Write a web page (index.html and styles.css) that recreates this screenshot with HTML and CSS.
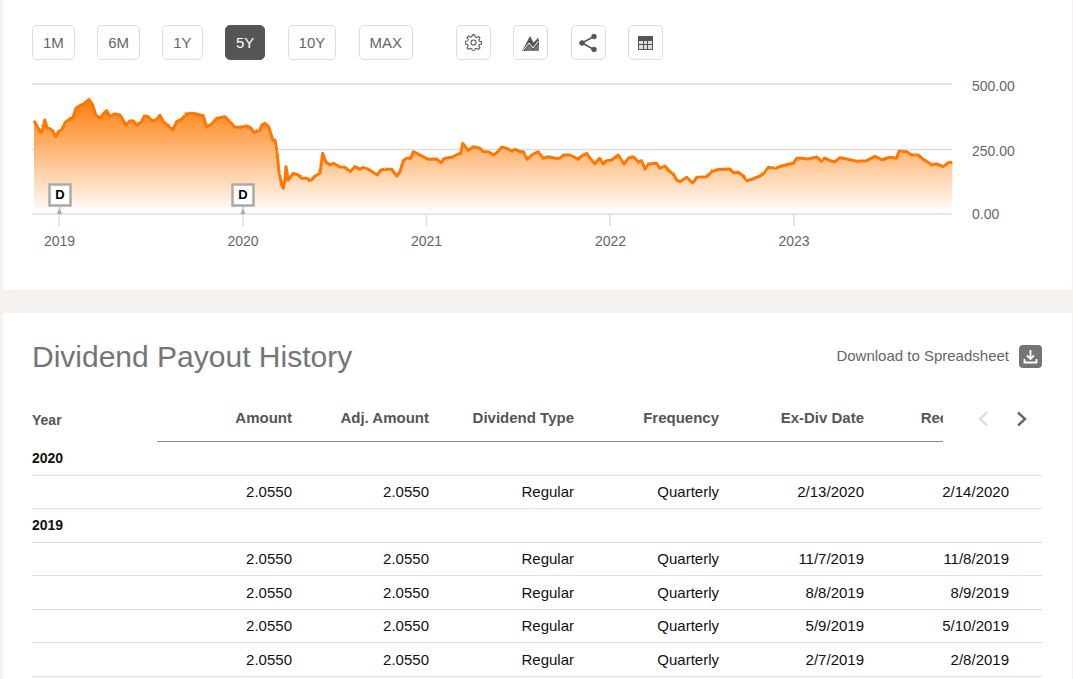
FILE: index.html
```html
<!DOCTYPE html>
<html lang="en">
<head>
  <meta charset="UTF-8" />
  <meta name="viewport" content="width=device-width, initial-scale=1.0"/>
  <title>Dividend Payout History</title>
  <link rel="stylesheet" href="styles.css">
</head>
<body>

  <section class="panel chart-panel">
    <div class="toolbar">
      <button class="tool">1M</button>
      <button class="tool">6M</button>
      <button class="tool">1Y</button>
      <button class="tool active">5Y</button>
      <button class="tool">10Y</button>
      <button class="tool">MAX</button>
      <button class="tool icon first-icon">
        <svg width="17" height="17" viewBox="0 0 16 16" fill="none" stroke="#555" stroke-width="1">
          <path d="M6.900 .8h2.200l.4 2 1.300.6 1.800-1.100 1.500 1.500-1.100 1.800.6 1.300 2 .4v2.200l-2 .4-.6 1.300 1.100 1.800-1.500 1.500-1.800-1.100-1.300.6-.4 2H6.900l-.4-2-1.300-.6-1.800 1.100-1.500-1.500 1.100-1.800-.6-1.300-2-.4V6.900l2-.4.6-1.300-1.100-1.800 1.500-1.500 1.800 1.100 1.300-.6z"/>
          <circle cx="8" cy="8" r="2.400"/>
        </svg>
      </button>
      <button class="tool icon">
        <svg width="17" height="16" viewBox="0 0 17 16">
          <path d="M0 16 8 1l3.500 6.500L16 3l1 2v11z" fill="#555"/>
          <path d="M1 15.500 7 8l4 5 5.500-7" fill="none" stroke="#fff" stroke-width="1"/>
          <path d="M3 16 7 10l4 5 6-6.500V16z" fill="#777"/>
        </svg>
      </button>
      <button class="tool icon">
        <svg width="18" height="18" viewBox="0 0 18 18" fill="#555" stroke="#555">
          <line x1="3" y1="9" x2="15" y2="2.500" stroke-width="1.500"/>
          <line x1="3" y1="9" x2="15" y2="15.500" stroke-width="1.500"/>
          <circle cx="3" cy="9" r="2.300"/>
          <circle cx="15" cy="2.500" r="2.300"/>
          <circle cx="15" cy="15.500" r="2.300"/>
        </svg>
      </button>
      <button class="tool icon">
        <svg width="15" height="14" viewBox="0 0 15 14">
          <rect x="0" y="0" width="15" height="14" fill="#555"/>
          <path d="M1 5h4v3H1zM6 5h3v3H6zM10 5h4v3h-4zM1 9h4v4H1zM6 9h3v4H6zM10 9h4v4h-4z" fill="#ddd"/>
        </svg>
      </button>
    </div>

    <svg class="chart" width="1000" height="170" viewBox="32 80 1000 170">
      <defs>
        <linearGradient id="areaFill" gradientUnits="userSpaceOnUse" x1="0" y1="99" x2="0" y2="214">
          <stop offset="0" stop-color="#ff7d0a"/>
          <stop offset="1" stop-color="#ffffff"/>
        </linearGradient>
        <filter id="rough" x="-1%" y="-10%" width="102%" height="120%">
          <feTurbulence type="fractalNoise" baseFrequency="0.35" numOctaves="2" seed="4"/>
          <feDisplacementMap in="SourceGraphic" scale="2" yChannelSelector="G" xChannelSelector="R"/>
        </filter>
      </defs>

      <g class="grid">
        <line x1="32" y1="84" x2="952" y2="84"/>
        <line x1="32" y1="149.500" x2="952" y2="149.500"/>
        <line x1="32" y1="214" x2="952" y2="214"/>
        <line x1="59" y1="214" x2="59" y2="226"/>
        <line x1="243" y1="214" x2="243" y2="226"/>
        <line x1="426.500" y1="214" x2="426.500" y2="226"/>
        <line x1="610" y1="214" x2="610" y2="226"/>
        <line x1="794" y1="214" x2="794" y2="226"/>
      </g>

      <path fill="url(#areaFill)" d="M34 213V120.700L37.300 126.700 40.700 132.700 42.700 130 44.700 120 47.300 128.300 51.700 129.300 55.700 136.700 58.300 131.700 62.300 129.300 65 122.700 68.300 120 72.700 118.300 76 108.300 80 105.700 85 103.300 89 99.300 92.700 105 95.700 115 100 118.300 104 113.300 106.700 110.700 109.300 116 115 114 120 115 126 125 130 120.700 133.300 121 136.700 125 141.700 121.700 144.300 116 148.300 116.700 151.700 120.700 156 120 160 115.300 163.300 121.700 168.300 126 172.700 130 176.700 121.700 181.700 119.300 186 114 191.700 113.300 196.700 114 203.300 116 206.700 126.700 211.700 124 216.700 118.300 225 116.700 230 121.700 235 127.300 240 127.300 246 126 250 127.300 254 132.300 260 130 261.700 125 265 123.300 268.700 126.700 272.700 140 275 140 277.300 153.300 278.700 170 281.700 185 283.300 188.300 285 180 286 166.700 288.300 180 293.300 173.300 298.300 175 301.700 178.300 306.700 178.300 310.700 180.700 315 176 320 173.300 322.700 153.300 325.700 161.700 330 165 333.300 163.300 340 167 345 167.300 350 171.700 355 166.700 360 169.300 363.300 167.300 368.300 169.300 372.300 171.700 377.300 175 380.700 170 385 169.300 391.700 169.300 396.700 176 400 171.700 403.300 160.700 406.700 158.300 410.700 158.300 413.300 151.700 418.300 154 423.300 156.700 428.300 159.300 436.700 159 441 162.700 445 158.300 451.700 157.300 458.300 154 460.700 153.300 462.700 143.300 468.300 150.700 473.300 146.700 480 148.300 483.300 151.700 488.300 151.700 493.300 155 496.700 152.700 501.700 147.300 506.700 148.300 511.700 151 515 149.300 520 151.700 523.300 151.700 527.300 159.300 531.700 155 538.300 151.700 543.300 158.300 548.300 156.700 555 158.300 560 158.300 563.300 155 570 155 578.300 159.300 581.700 156 586.700 153.300 590 158.300 595 164 599.300 158.300 603.300 164 606.700 160.700 611.700 160 618.300 155 624 164 628.300 158.300 633.300 156.700 638.300 161.700 641.700 160.700 645 169.300 648.300 164 656.700 163.300 660 168.300 665 166 670 171.700 673.300 174 676.700 180 680 181.700 686.700 177.300 692.700 183.300 696.700 177.300 706.700 176.700 711.700 171.700 718.300 169.300 725 169.300 730 169 733.300 172.700 738.300 172.300 743.300 176 746.700 180.700 751.700 179.300 760 176 764 173.300 768.300 167.300 775 168.300 781.700 166 788.300 164.300 793.300 163.300 796.700 158.300 801.700 158.300 808.300 159 816.700 157 821.700 161 825 158 830 160.700 835 161.700 840 157.700 846.700 159 856.700 161.300 866.700 160.700 875 156.300 881.700 159.700 890 157.300 896.700 158.300 899 151.300 906.700 151.700 911.700 155 918.300 155 923.300 159.300 931.700 164.700 936.700 164 943.300 166.700 948.300 162.700 952.300 162.300V213z"/>
      <path class="price" filter="url(#rough)" d="M34 120.700L37.300 126.700 40.700 132.700 42.700 130 44.700 120 47.300 128.300 51.700 129.300 55.700 136.700 58.300 131.700 62.300 129.300 65 122.700 68.300 120 72.700 118.300 76 108.300 80 105.700 85 103.300 89 99.300 92.700 105 95.700 115 100 118.300 104 113.300 106.700 110.700 109.300 116 115 114 120 115 126 125 130 120.700 133.300 121 136.700 125 141.700 121.700 144.300 116 148.300 116.700 151.700 120.700 156 120 160 115.300 163.300 121.700 168.300 126 172.700 130 176.700 121.700 181.700 119.300 186 114 191.700 113.300 196.700 114 203.300 116 206.700 126.700 211.700 124 216.700 118.300 225 116.700 230 121.700 235 127.300 240 127.300 246 126 250 127.300 254 132.300 260 130 261.700 125 265 123.300 268.700 126.700 272.700 140 275 140 277.300 153.300 278.700 170 281.700 185 283.300 188.300 285 180 286 166.700 288.300 180 293.300 173.300 298.300 175 301.700 178.300 306.700 178.300 310.700 180.700 315 176 320 173.300 322.700 153.300 325.700 161.700 330 165 333.300 163.300 340 167 345 167.300 350 171.700 355 166.700 360 169.300 363.300 167.300 368.300 169.300 372.300 171.700 377.300 175 380.700 170 385 169.300 391.700 169.300 396.700 176 400 171.700 403.300 160.700 406.700 158.300 410.700 158.300 413.300 151.700 418.300 154 423.300 156.700 428.300 159.300 436.700 159 441 162.700 445 158.300 451.700 157.300 458.300 154 460.700 153.300 462.700 143.300 468.300 150.700 473.300 146.700 480 148.300 483.300 151.700 488.300 151.700 493.300 155 496.700 152.700 501.700 147.300 506.700 148.300 511.700 151 515 149.300 520 151.700 523.300 151.700 527.300 159.300 531.700 155 538.300 151.700 543.300 158.300 548.300 156.700 555 158.300 560 158.300 563.300 155 570 155 578.300 159.300 581.700 156 586.700 153.300 590 158.300 595 164 599.300 158.300 603.300 164 606.700 160.700 611.700 160 618.300 155 624 164 628.300 158.300 633.300 156.700 638.300 161.700 641.700 160.700 645 169.300 648.300 164 656.700 163.300 660 168.300 665 166 670 171.700 673.300 174 676.700 180 680 181.700 686.700 177.300 692.700 183.300 696.700 177.300 706.700 176.700 711.700 171.700 718.300 169.300 725 169.300 730 169 733.300 172.700 738.300 172.300 743.300 176 746.700 180.700 751.700 179.300 760 176 764 173.300 768.300 167.300 775 168.300 781.700 166 788.300 164.300 793.300 163.300 796.700 158.300 801.700 158.300 808.300 159 816.700 157 821.700 161 825 158 830 160.700 835 161.700 840 157.700 846.700 159 856.700 161.300 866.700 160.700 875 156.300 881.700 159.700 890 157.300 896.700 158.300 899 151.300 906.700 151.700 911.700 155 918.300 155 923.300 159.300 931.700 164.700 936.700 164 943.300 166.700 948.300 162.700 952.300 162.300"/>

      <g class="marker">
        <path class="stem" d="M59.500 207v4M57.500 213.500l2-4 2 4z"/>
        <rect x="49.500" y="184.500" width="21" height="21"/>
        <text x="60" y="199">D</text>
      </g>
      <g class="marker">
        <path class="stem" d="M243 207v4M241 213.500l2-4 2 4z"/>
        <rect x="232.500" y="184.500" width="21" height="21"/>
        <text x="243" y="199">D</text>
      </g>

      <g class="axis-x">
        <text x="59.500" y="246">2019</text>
        <text x="243" y="246">2020</text>
        <text x="426.500" y="246">2021</text>
        <text x="610.500" y="246">2022</text>
        <text x="794" y="246">2023</text>
      </g>
      <g class="axis-y">
        <text x="972" y="91">500.00</text>
        <text x="972" y="156">250.00</text>
        <text x="972" y="219">0.00</text>
      </g>
    </svg>
  </section>

  <section class="panel history-panel">
    <div class="history-top">
      <h2>Dividend Payout History</h2>
      <a class="download">
        <span class="download-text">Download to Spreadsheet</span>
        <span class="download-icon">
          <svg width="15" height="15" viewBox="0 0 15 15" fill="none" stroke="#fff" stroke-width="1.800">
            <path d="M7.500 1v8.500M4 6.500l3.500 3.500L11 6.500"/>
            <path d="M1.500 10v3.500h12V10"/>
          </svg>
        </span>
      </a>
    </div>

    <div class="head-row">
      <div class="year-head">Year</div>
      <div class="head-scroll">
        <div class="cell c-amount">Amount</div>
        <div class="cell c-adj">Adj. Amount</div>
        <div class="cell c-type">Dividend Type</div>
        <div class="cell c-freq">Frequency</div>
        <div class="cell c-date">Ex-Div Date</div>
        <div class="cell c-date">Record Date</div>
      </div>
      <div class="pager">
        <svg width="10" height="16" viewBox="0 0 10 16" fill="none" stroke="#ddd" stroke-width="2.400"><path d="M9 1.500 2 8l7 6.500"/></svg>
        <svg width="10" height="16" viewBox="0 0 10 16" fill="none" stroke="#666" stroke-width="2.400"><path d="M1 1.500 8 8l-7 6.500"/></svg>
      </div>
    </div>

    <div class="row year-row"><div class="year-cell">2020</div></div>
    <div class="row">
      <div class="year-cell"></div>
      <div class="cell c-amount">2.0550</div><div class="cell c-adj">2.0550</div><div class="cell c-type">Regular</div><div class="cell c-freq">Quarterly</div><div class="cell c-date">2/13/2020</div><div class="cell c-date">2/14/2020</div>
    </div>
    <div class="row year-row"><div class="year-cell">2019</div></div>
    <div class="row">
      <div class="year-cell"></div>
      <div class="cell c-amount">2.0550</div><div class="cell c-adj">2.0550</div><div class="cell c-type">Regular</div><div class="cell c-freq">Quarterly</div><div class="cell c-date">11/7/2019</div><div class="cell c-date">11/8/2019</div>
    </div>
    <div class="row">
      <div class="year-cell"></div>
      <div class="cell c-amount">2.0550</div><div class="cell c-adj">2.0550</div><div class="cell c-type">Regular</div><div class="cell c-freq">Quarterly</div><div class="cell c-date">8/8/2019</div><div class="cell c-date">8/9/2019</div>
    </div>
    <div class="row">
      <div class="year-cell"></div>
      <div class="cell c-amount">2.0550</div><div class="cell c-adj">2.0550</div><div class="cell c-type">Regular</div><div class="cell c-freq">Quarterly</div><div class="cell c-date">5/9/2019</div><div class="cell c-date">5/10/2019</div>
    </div>
    <div class="row">
      <div class="year-cell"></div>
      <div class="cell c-amount">2.0550</div><div class="cell c-adj">2.0550</div><div class="cell c-type">Regular</div><div class="cell c-freq">Quarterly</div><div class="cell c-date">2/7/2019</div><div class="cell c-date">2/8/2019</div>
    </div>
  </section>

</body>
</html>
```
FILE: styles.css
```css
html, body {
  height: 679px;
  overflow: hidden;
}

body {
  margin: 0;
  padding: 0 1px 0 3px;
  background-color: #f5f2f0;
  font-family: "Liberation Sans", Arial, sans-serif;
}

.panel {
  background: #fff;
  padding-left: 29px;
}

.chart-panel {
  height: 290px;
  padding-top: 25px;
  box-sizing: border-box;
  margin-bottom: 23px;
}

.toolbar {
  display: flex;
  gap: 22.3px;
  height: 35px;
  margin-bottom: 20px;
}

.tool {
  padding: 0 10px;
  border: 1px solid #ddd;
  border-radius: 5px;
  background: #fff;
  color: #666;
  font-family: inherit;
  font-size: 15px;
}

.tool.active {
  background: #555;
  border-color: #555;
  color: #fff;
}

.tool.icon {
  display: flex;
  align-items: center;
  justify-content: center;
  width: 35px;
  padding: 0;
}

.first-icon {
  margin-left: 20.5px;
}

.chart {
  display: block;
}

.grid line {
  stroke: #ddd;
  stroke-width: 1.5;
}

.price {
  fill: none;
  stroke: #ff7700;
  stroke-width: 3;
  stroke-linejoin: round;
}

.marker rect {
  fill: #fff;
  stroke: #aaa;
  stroke-width: 2.5;
}

.marker text {
  font-size: 13px;
  font-weight: bold;
  text-anchor: middle;
  fill: #000;
}

.stem {
  fill: #aaa;
  stroke: #aaa;
}

.axis-x text,
.axis-y text {
  font-size: 14px;
  fill: #666;
}

.axis-x text {
  text-anchor: middle;
}

.history-panel {
  height: 366px;
  padding-top: 28px;
}

.history-top {
  display: flex;
  justify-content: space-between;
  align-items: center;
  width: 1010px;
  height: 32px;
  margin-bottom: 26px;
}

.history-top h2 {
  margin: 0;
  font-size: 30px;
  font-weight: normal;
  color: #757575;
}

.download {
  display: flex;
  align-items: center;
  gap: 10px;
  margin-top: -1px;
  font-size: 15px;
  color: #666;
}

.download-text {
  margin-bottom: 2px;
}

.download-icon {
  display: flex;
  align-items: center;
  justify-content: center;
  width: 23px;
  height: 23px;
  border-radius: 4px;
  background: #757575;
}

.head-row {
  display: flex;
  width: 1010px;
  height: 43px;
  font-size: 15px;
  font-weight: bold;
  color: #555;
}

.year-head {
  width: 125px;
  padding-top: 13px;
  font-size: 14px;
}

.head-scroll {
  display: flex;
  width: 786px;
  height: 42px;
  overflow: hidden;
  line-height: 38px;
  border-bottom: 1px solid #888;
}

.pager {
  display: flex;
  justify-content: flex-end;
  gap: 29px;
  flex: 1;
  padding: 12px 15px 0 0;
}

.row {
  display: flex;
  align-items: center;
  box-sizing: border-box;
  width: 1010px;
  height: 33.5px;
  border-bottom: 1px solid #ddd;
  font-size: 15px;
  color: #111;
}

.year-cell {
  flex: none;
  width: 125px;
  font-size: 14px;
  font-weight: bold;
  color: #111;
}

.cell {
  flex: none;
  text-align: right;
  white-space: nowrap;
}

.c-amount { width: 135px; }
.c-adj { width: 137px; }
.c-type, .c-freq, .c-date { width: 145px; }
```
